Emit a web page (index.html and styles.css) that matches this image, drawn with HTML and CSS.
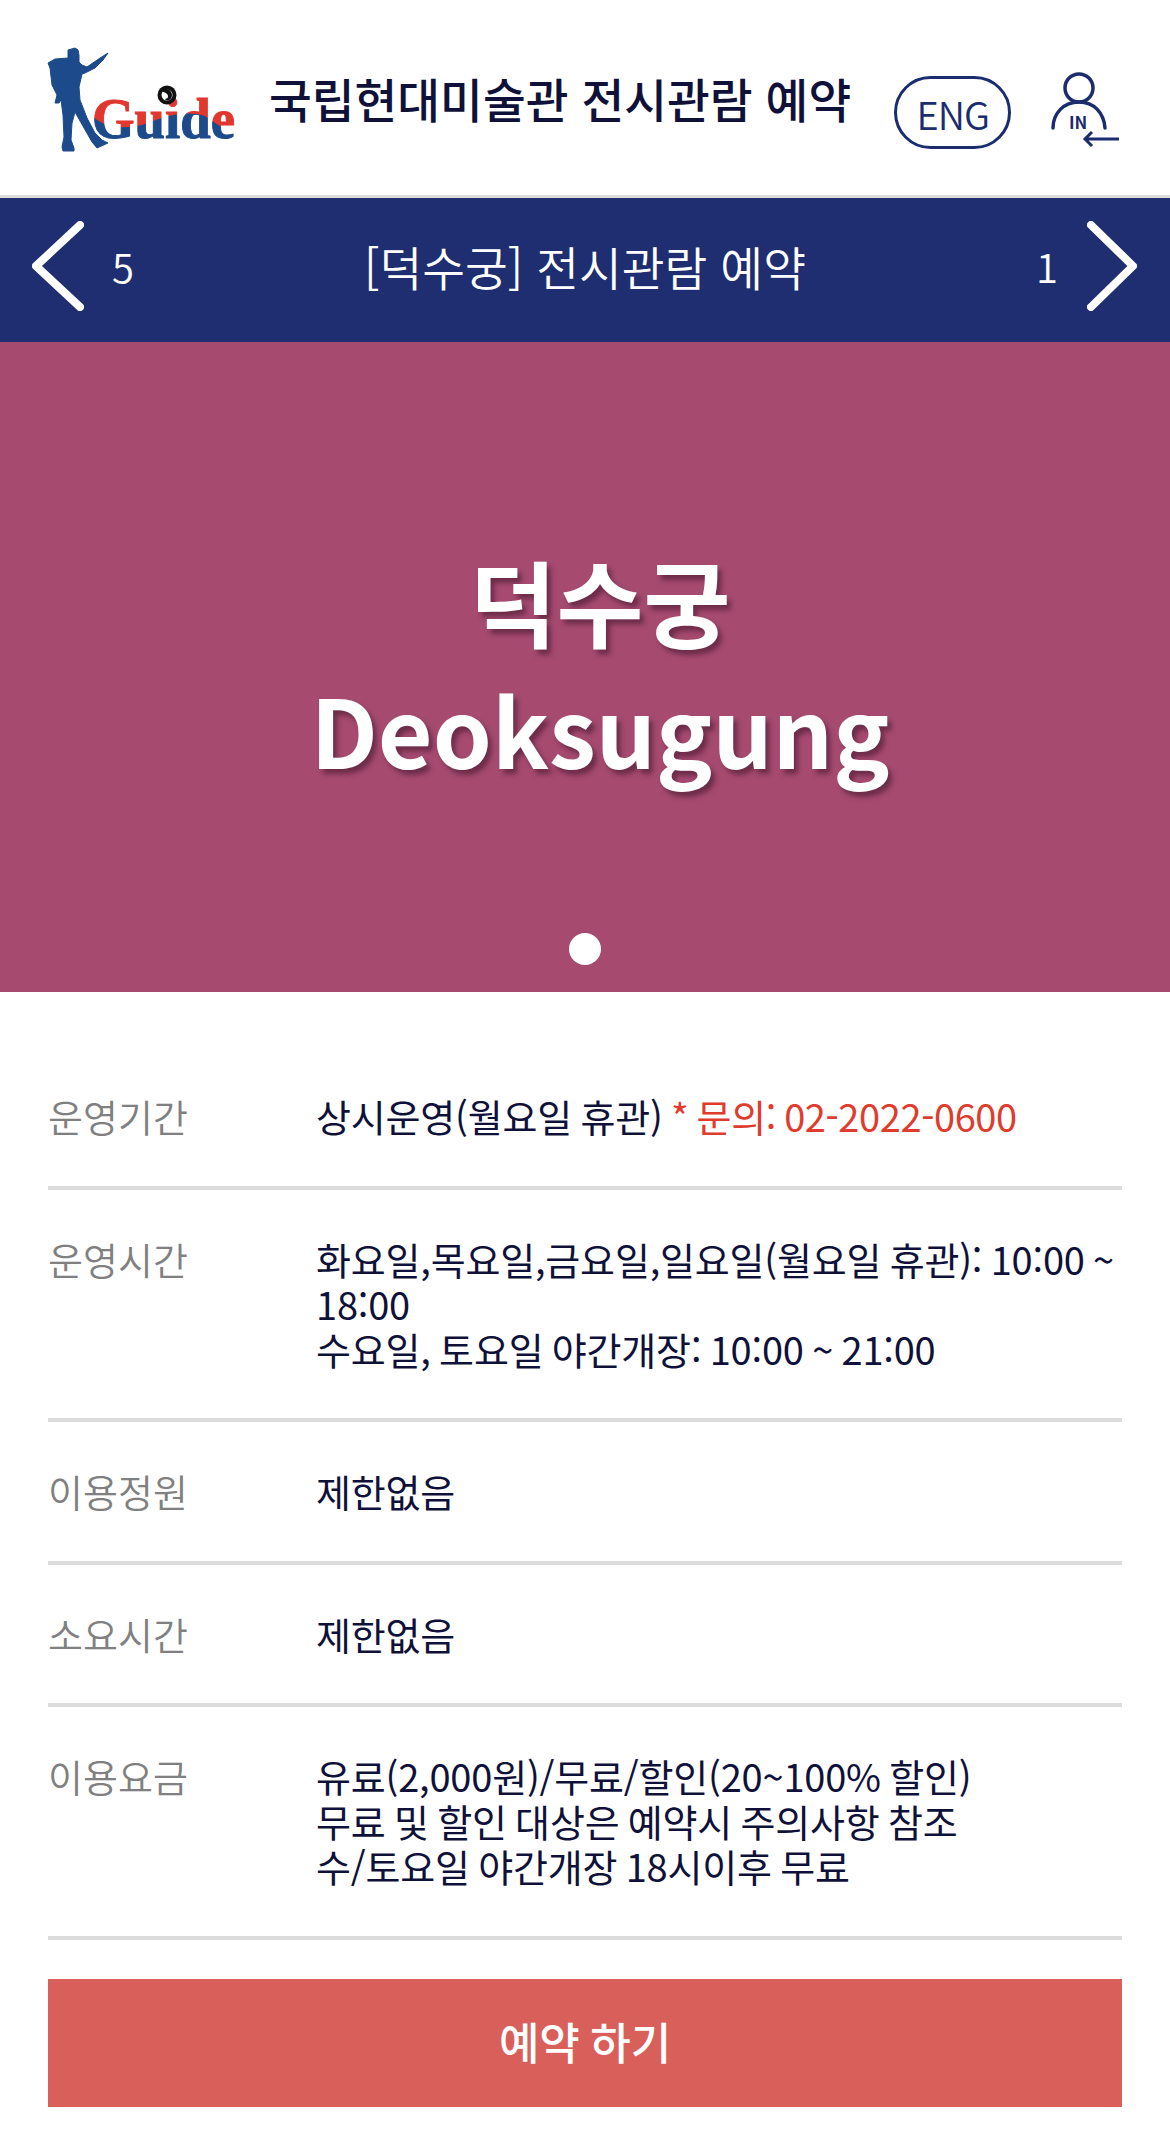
FILE: index.html
```html
<!DOCTYPE html>
<html lang="ko">
<head>
    <meta charset="utf-8">
    <title>덕수궁 전시관람 예약</title>
    <link rel="stylesheet" href="styles.css">
</head>
<body>
    <header class="top">
        <svg class="logo" viewBox="45 43 205 110" width="205" height="110">
            <defs>
                <pattern id="wave" patternUnits="userSpaceOnUse" x="80" y="80" width="170" height="70">
                    <rect x="0" y="0" width="170" height="70" fill="#1c4a8a"/>
                    <path fill="#e0382f" d="M0 0 H170 V58 C155 56 142 48 125 36 C105 30 85 36 65 44 C45 50 25 48 12 36 L0 30Z"/>
                </pattern>
            </defs>
            <!-- hiker -->
            <path fill="#1c4a8a" stroke="#1c4a8a" stroke-width="1" stroke-linejoin="round" d="M68 50 L75 48 L78 50 L79 55 L79 62 L82 65 L87 67 L100 58 L108 53 L103 60 L95 68 L85 73 L82 74 L79 87 L80 100 L87 118 L95 133 L102 140 L108 143 L97 148 L92 142 L75 112 L72 123 L71 140 L74 148 L74 151 L63 151 L62 147 L64 137 L63 115 L61 100 L59 103 L55 103 L57 95 L52 85 L50 68 L48 63 L55 59 L68 58 L68 53Z"/>
            <text class="logo-text" x="92" y="138" textLength="143" lengthAdjust="spacingAndGlyphs" fill="url(#wave)" stroke="url(#wave)" stroke-width="1">Guide</text>
            <!-- swirl over the i -->
            <circle cx="167" cy="95" r="9.5" fill="#111"/>
            <circle cx="167" cy="95" r="5.5" fill="#fff"/>
            <path fill="#111" d="M161 90 C166 87 172 90 172 95 C172 100 167 102 165 99 C168 99 169 96 167 94 C165 92 162 92 161 90Z"/>
        </svg>
        <h1 class="title">국립현대미술관 전시관람 예약</h1>
        <a class="lang">ENG</a>
        <svg class="login" viewBox="0 0 75 80" width="75" height="80" fill="none" stroke="#1b2d6e" stroke-width="3.5">
            <circle cx="31" cy="18" r="14"/>
            <path d="M5 58 C5 43 16 32 31 32 C46 32 56 43 57 58" stroke-linecap="round"/>
            <path d="M37 69 H71 M44 62 L37 69 L44 76" stroke-width="3"/>
            <text class="login-in" x="21" y="59">IN</text>
        </svg>
    </header>
    <nav class="bar">
        <div class="side">
            <svg class="chevron" viewBox="0 0 56 100" width="56" height="100"><path d="M50 9 L6 50 L50 91"/></svg>
            <span class="num">5</span>
        </div>
        <span class="bar-title">[덕수궁] 전시관람 예약</span>
        <div class="side side-right">
            <span class="num">1</span>
            <svg class="chevron" viewBox="0 0 56 100" width="56" height="100"><path d="M7 9 L49 50 L7 91"/></svg>
        </div>
    </nav>
    <section class="banner">
        <div class="banner-text">덕수궁<br>Deoksugung</div>
        <span class="dot"></span>
    </section>
    <div class="info">
        <div class="row"><div class="label">운영기간</div><div class="value">상시운영(월요일 휴관) <span class="red">* 문의: 02-2022-0600</span></div></div>
        <div class="row"><div class="label">운영시간</div><div class="value">화요일,목요일,금요일,일요일(월요일 휴관): 10:00 ~ 18:00<br>수요일, 토요일 야간개장: 10:00 ~ 21:00</div></div>
        <div class="row"><div class="label">이용정원</div><div class="value">제한없음</div></div>
        <div class="row"><div class="label">소요시간</div><div class="value">제한없음</div></div>
        <div class="row"><div class="label">이용요금</div><div class="value">유료(2,000원)/무료/할인(20~100% 할인)<br>무료 및 할인 대상은 예약시 주의사항 참조<br>수/토요일 야간개장 18시이후 무료</div></div>
    </div>
    <a class="book">예약 하기</a>
</body>
</html>
```
FILE: styles.css
```css
* { box-sizing: border-box; }
body {
    margin: 0;
    font-family: "Noto Sans CJK KR", "Noto Sans", sans-serif;
    color: #0f1138;
    background: #fff;
}
.top {
    display: flex;
    align-items: center;
    height: 198px;
    padding-left: 45px;
    border-bottom: 3px solid #dcdcdc;
}
.logo, .login { flex: none; }
.logo { filter: blur(0.4px); }
.logo-text { font-family: "Liberation Serif", serif; font-weight: 700; font-size: 58px; }
.title { margin: 0 0 0 19px; font-size: 46.5px; font-weight: 500; white-space: nowrap; flex: none; }
.lang {
    flex: none;
    width: 117px;
    height: 73px;
    margin: 30px 0 0 43px;
    border: 3px solid #1b2d6e;
    border-radius: 37px;
    color: #1b2d6e;
    font-size: 38px;
    font-weight: 350;
    letter-spacing: -1px;
    line-height: 70px;
    text-align: center;
}
.login { margin: 25px 0 0 37px; }
.login-in { font-size: 17px; font-weight: 700; fill: #1b2d6e; stroke: none; }

.bar {
    display: flex;
    align-items: center;
    height: 144px;
    padding-bottom: 9px;
    background: #1e2e70;
    color: #fff;
}
.side { display: flex; align-items: center; gap: 26px; width: 200px; padding: 0 30px; font-size: 40px; font-weight: 350; }
.side-right { justify-content: flex-end; }
.chevron { flex: none; fill: none; stroke: #fff; stroke-width: 8; stroke-linecap: round; stroke-linejoin: round; filter: blur(0.7px); }
.bar-title { flex: 1; text-align: center; font-size: 46.5px; font-weight: 350; white-space: nowrap; }

.banner {
    position: relative;
    height: 650px;
    background: #a64a70;
    color: #fff;
    text-align: center;
}
.banner-text {
    padding: 194px 0 0 30px;
    font-size: 94.5px;
    font-weight: 700;
    line-height: 128px;
    text-shadow: 4px 5px 5px rgba(60, 20, 40, 0.55);
}
.dot { position: absolute; left: 569px; top: 591px; width: 32px; height: 32px; border-radius: 50%; background: #fff; }

.info { padding: 55px 48px 0; }
.row { display: flex; padding: 46px 0 47.5px; border-bottom: 4px solid #dcdcdc; font-size: 38px; line-height: 45px; }
.label { width: 268px; flex: none; color: #808080; font-weight: 350; }
.value { word-spacing: -2px; letter-spacing: -0.2px; }
.red { color: #e03c2e; letter-spacing: -0.4px; }

.book {
    display: block;
    margin: 39px 48px 0;
    height: 128px;
    background: #d9605a;
    color: #fff;
    font-size: 44px;
    font-weight: 500;
    word-spacing: -2px;
    text-align: center;
    line-height: 124px;
}
```
